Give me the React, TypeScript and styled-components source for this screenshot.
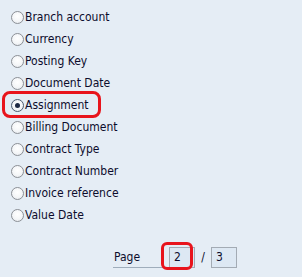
import React from "react";
import styled, { createGlobalStyle } from "styled-components";

const Global = createGlobalStyle`
  html, body { margin: 0; padding: 0; background: #e5edf5; }
  body { width: 302px; height: 277px; overflow: hidden; }
`;

const Panel = styled.div`
  width: 302px;
  height: 277px;
  box-sizing: border-box;
  padding: 6px 0 0 11px;
  font-family: "DejaVu Sans Condensed", "DejaVu Sans", sans-serif;
  font-stretch: condensed;
  font-size: 12px;
  color: #0c0c2c;
  display: flex;
  flex-direction: column;
`;

const List = styled.div`
  display: flex;
  flex-direction: column;
`;

const Row = styled.label<{ $highlight?: boolean }>`
  position: relative;
  height: 22px;
  display: flex;
  align-items: center;
  gap: 1px;
  ${(p) =>
    p.$highlight &&
    `
    &::before {
      content: "";
      position: absolute;
      left: -9px;
      top: -3px;
      width: 99px;
      height: 27px;
      box-sizing: border-box;
      border: 3.5px solid #e8141c;
      border-radius: 8px;
    }
  `}
`;

const Radio = styled.span<{ $checked?: boolean }>`
  width: 13px;
  height: 13px;
  flex: none;
  box-sizing: border-box;
  border-radius: 50%;
  border: 1px solid ${(p) => (p.$checked ? "#4d5d70" : "#8c9096")};
  background: radial-gradient(circle at 50% 40%, #ffffff 0%, #f4f6f8 55%, #dfe3e8 100%);
  display: flex;
  align-items: center;
  justify-content: center;
  &::after {
    content: "";
    display: ${(p) => (p.$checked ? "block" : "none")};
    width: 5px;
    height: 5px;
    border-radius: 50%;
    background: #1e2a44;
  }
`;

const Pager = styled.div`
  margin-top: 20px;
  padding-left: 102px;
  display: flex;
  align-items: center;
  height: 22px;
`;

const PageLabel = styled.span`
  width: 55px;
  box-sizing: border-box;
  padding-left: 1px;
  height: 22px;
  line-height: 22px;
  border-bottom: 1px solid #9fadbb;
  margin-right: 1px;
`;

const Field = styled.span<{ $mark?: boolean }>`
  position: relative;
  width: 26px;
  height: 21px;
  box-sizing: border-box;
  border: 1px solid #a3abb4;
  background: #dde8f3;
  padding-left: 4px;
  line-height: 19px;
  ${(p) =>
    p.$mark &&
    `
    &::before {
      content: "";
      position: absolute;
      left: -9px;
      top: -6px;
      width: 32px;
      height: 28px;
      box-sizing: border-box;
      border: 3.5px solid #e8141c;
      border-radius: 6px;
    }
  `}
`;

const Slash = styled.span`
  width: 16px;
  text-align: center;
`;

const items = [
  "Branch account",
  "Currency",
  "Posting Key",
  "Document Date",
  "Assignment",
  "Billing Document",
  "Contract Type",
  "Contract Number",
  "Invoice reference",
  "Value Date",
];

export default function App() {
  return (
    <>
      <Global />
      <Panel>
        <List>
          {items.map((t) => (
            <Row key={t} $highlight={t === "Assignment"}>
              <Radio $checked={t === "Assignment"} />
              <span>{t}</span>
            </Row>
          ))}
        </List>
        <Pager>
          <PageLabel>Page</PageLabel>
          <Field $mark>2</Field>
          <Slash>/</Slash>
          <Field>3</Field>
        </Pager>
      </Panel>
    </>
  );
}
